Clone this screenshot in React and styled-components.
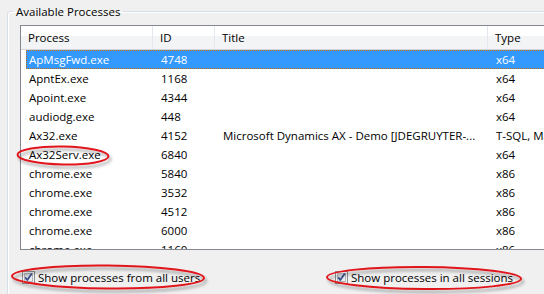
import styled, { createGlobalStyle } from 'styled-components';

const GlobalStyle = createGlobalStyle`
    html, body {
        margin: 0;
        padding: 0;
        background: #f0f0f0;
        overflow: hidden;
    }
    body {
        font-family: "Open Sans", "Noto Sans", sans-serif;
        font-size: 11.5px;
        color: #000;
    }
`;

const columns = [
    { label: 'Process', width: 132 },
    { label: 'ID', width: 62 },
    { label: 'Title', width: 273 },
    { label: 'Type', width: 140 },
];

const processes = [
    { name: 'ApMsgFwd.exe', id: 4748, title: '', type: 'x64', selected: true },
    { name: 'ApntEx.exe', id: 1168, title: '', type: 'x64' },
    { name: 'Apoint.exe', id: 4344, title: '', type: 'x64' },
    { name: 'audiodg.exe', id: 448, title: '', type: 'x64' },
    { name: 'Ax32.exe', id: 4152, title: 'Microsoft Dynamics AX - Demo [JDEGRUYTER-...', type: 'T-SQL, Managed' },
    { name: 'Ax32Serv.exe', id: 6840, title: '', type: 'x64' },
    { name: 'chrome.exe', id: 5840, title: '', type: 'x86' },
    { name: 'chrome.exe', id: 3532, title: '', type: 'x86' },
    { name: 'chrome.exe', id: 4512, title: '', type: 'x86' },
    { name: 'chrome.exe', id: 6000, title: '', type: 'x86' },
    { name: 'chrome.exe', id: 1160, title: '', type: 'x86' },
];

function CheckBox() {
    return (
        <svg width="13" height="13" viewBox="0 0 13 13">
            <defs>
                <linearGradient id="cbInner" x1="0" y1="0" x2="1" y2="1">
                    <stop offset="0" stopColor="#cbcfd5" />
                    <stop offset="1" stopColor="#f6f6f6" />
                </linearGradient>
            </defs>
            <rect x="0.5" y="0.5" width="12" height="12" fill="#f4f4f4" stroke="#8e8f8f" />
            <rect x="2.5" y="2.5" width="8" height="8" fill="url(#cbInner)" stroke="#b3b7bd" />
            <path d="M3.2 6.4 L5.3 9 L9.8 2.6" fill="none" stroke="#3d4f8a" strokeWidth="1.8" strokeLinejoin="round" />
        </svg>
    );
}

function Annotations() {
    return (
        <Overlay width="544" height="294" viewBox="0 0 544 294">
            <defs>
                <filter id="shadow" x="-20%" y="-50%" width="140%" height="200%">
                    <feDropShadow dx="2" dy="3" stdDeviation="1.5" floodColor="#000" floodOpacity="0.35" />
                </filter>
            </defs>
            <g fill="none" stroke="#e0151b" strokeWidth="2" filter="url(#shadow)">
                <ellipse cx="63" cy="155.5" rx="45.5" ry="9" transform="rotate(1 63 155.5)" />
                <ellipse cx="108" cy="277" rx="96" ry="11.5" transform="rotate(0.6 108 277)" />
                <ellipse cx="424" cy="278" rx="97" ry="11" transform="rotate(0.5 424 278)" />
            </g>
        </Overlay>
    );
}

export default function App() {
    return (
        <Page>
            <GlobalStyle />
            <GroupBox>
                <Legend>Available Processes</Legend>
                <ListView>
                    <Header>
                        {columns.map(({ label, width }) => (
                            <HeaderCell key={label} $width={width}>{label}</HeaderCell>
                        ))}
                    </Header>
                    {processes.map((p, i) => (
                        <Row key={i} $selected={p.selected}>
                            <Cell $first>{p.name}</Cell>
                            <Cell>{p.id}</Cell>
                            <Cell>{p.title}</Cell>
                            <Cell>{p.type}</Cell>
                        </Row>
                    ))}
                </ListView>
                <Options>
                    <Option><CheckBox />Show processes from all users</Option>
                    <Option><CheckBox />Show processes in all sessions</Option>
                </Options>
            </GroupBox>
            <Annotations />
        </Page>
    );
}

const Page = styled.div`
    position: relative;
    width: 544px;
    height: 294px;
    overflow: hidden;
    padding-top: 4px;
    box-sizing: border-box;
`;

const GroupBox = styled.fieldset`
    margin: 0 0 0 7px;
    padding: 0;
    width: 620px;
    height: 400px;
    border: 1px solid #d5dfe5;
    border-radius: 3px;
    box-shadow: inset 1px 1px 0 #fff;
    box-sizing: border-box;
`;

const Legend = styled.legend`
    margin-left: 5px;
    padding: 0 3px;
    line-height: 15px;
`;

const ListView = styled.div`
    margin: 6px 0 0 12px;
    width: 600px;
    height: 225px;
    box-sizing: border-box;
    border: 1px solid #828790;
    background: #fff;
    overflow: hidden;
`;

const Header = styled.div`
    display: flex;
    height: 24px;
    border-bottom: 1px solid #d5d5d5;
    box-sizing: border-box;
    background: linear-gradient(to bottom, #ffffff 0%, #ffffff 42%, #f3f4f6 43%, #f3f4f6 100%);
`;

const HeaderCell = styled.div`
    flex: 0 0 ${p => p.$width}px;
    box-sizing: border-box;
    padding-left: 7px;
    border-right: 1px solid #e3e8ee;
    line-height: 23px;
    white-space: nowrap;
`;

const Row = styled.div`
    display: grid;
    grid-template-columns: 127px 62px 273px 1fr;
    height: 19px;
    margin-left: 5px;
    line-height: 19px;
    box-sizing: border-box;
    color: ${p => (p.$selected ? '#fff' : '#000')};
    background: ${p => (p.$selected ? '#3399ff' : 'transparent')};
    border: ${p => (p.$selected ? '1px dotted #cc6600' : '1px solid transparent')};
    line-height: 17px;
`;

const Cell = styled.div`
    padding-left: ${p => (p.$first ? '2px' : '7px')};
    white-space: nowrap;
    overflow: hidden;
`;

const Options = styled.div`
    display: grid;
    grid-template-columns: 313px auto;
    align-items: center;
    height: 19px;
    margin-top: 18px;
    padding-left: 14px;
`;

const Option = styled.label`
    display: flex;
    align-items: center;
    gap: 3px;
    white-space: nowrap;
`;

const Overlay = styled.svg`
    position: absolute;
    left: 0;
    top: 0;
    pointer-events: none;
`;
